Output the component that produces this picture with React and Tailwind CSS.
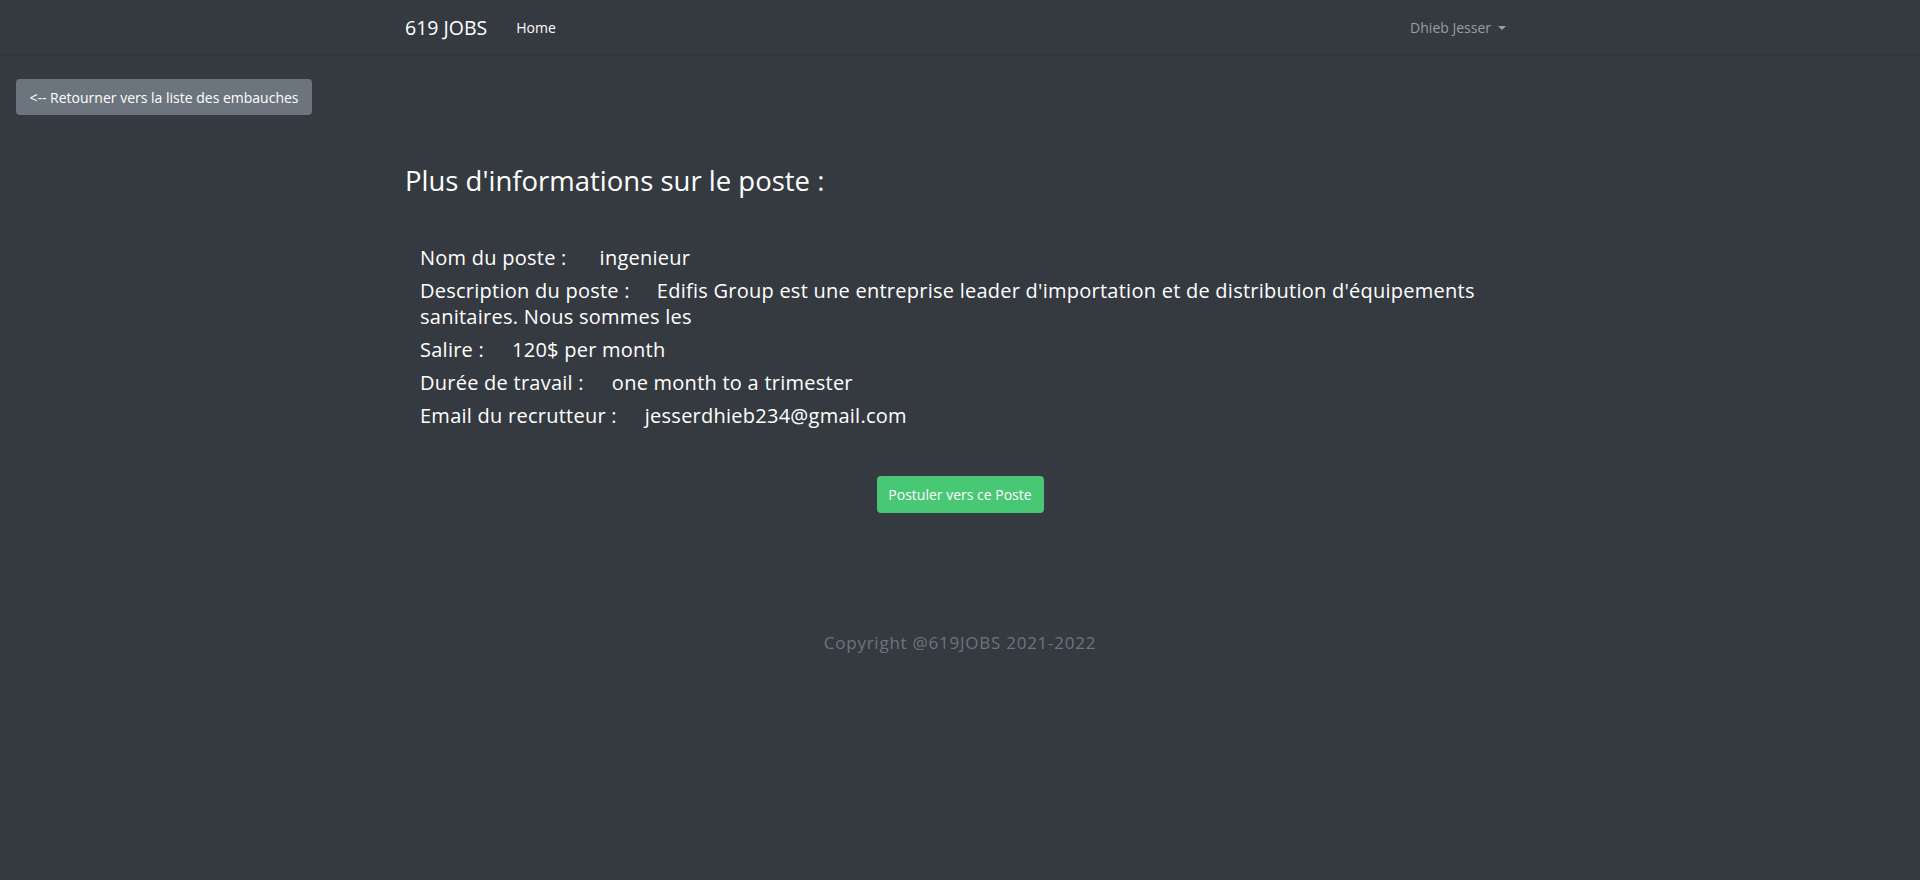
export default function App() {
  const font = { fontFamily: '"Open Sans", "Noto Sans", sans-serif' };
  const items = [
    ["Nom du poste :", "ingenieur", "ml-[33px]"],
    ["Description du poste :", "Edifis Group est une entreprise leader d'importation et de distribution d'équipements sanitaires. Nous sommes les", "ml-[27px]"],
    ["Salire :", "120$ per month", "ml-[28px]"],
    ["Durée de travail :", "one month to a trimester", "ml-[28px]"],
    ["Email du recrutteur :", "jesserdhieb234@gmail.com", "ml-[28px]"],
  ];
  return (
    <div className="min-h-[880px] bg-[#343a40] text-white" style={font}>
      <nav className="h-[56px] border-b border-[#30353b]">
        <div className="w-[1140px] mx-auto px-[15px] h-full flex items-center">
          <span className="text-[19.5px] leading-none">619 JOBS</span>
          <span className="ml-[29px] text-[14px] leading-none">Home</span>
          <span className="ml-auto mr-[9px] text-[14px] leading-none text-[#9a9da0] flex items-center">
            Dhieb Jesser
            <span className="ml-[7px] w-0 h-0 border-l-[4px] border-r-[4px] border-t-[4px] border-l-transparent border-r-transparent border-t-[#9a9da0]" />
          </span>
        </div>
      </nav>
      <div className="pt-[23px] pl-[16px]">
        <button className="h-[36px] w-[296px] rounded-[4px] bg-[#6c757d] text-[14px] text-white">
          &lt;-- Retourner vers la liste des embauches
        </button>
      </div>
      <div className="w-[1140px] mx-auto px-[15px]">
        <h3 className="mt-[49px] text-[27.5px] leading-[34px]">Plus d'informations sur le poste :</h3>
        <div className="mt-[47px] px-[15px] flex flex-col gap-[7px]">
          {items.map(([l, v, m]) => (
            <div key={l} className="text-[20px] leading-[26px] tracking-[0.25px]">
              {l}
              <span className={m}>{v}</span>
            </div>
          ))}
        </div>
        <div className="mt-[47px] flex justify-center">
          <button className="h-[37px] w-[167px] rounded-[4px] bg-[#48c774] text-[14px] text-white">
            Postuler vers ce Poste
          </button>
        </div>
      </div>
      <div className="mt-[118px] text-center text-[17px] leading-[24px] tracking-[0.75px] text-[#6c757d]">
        Copyright @619JOBS 2021-2022
      </div>
    </div>
  );
}
